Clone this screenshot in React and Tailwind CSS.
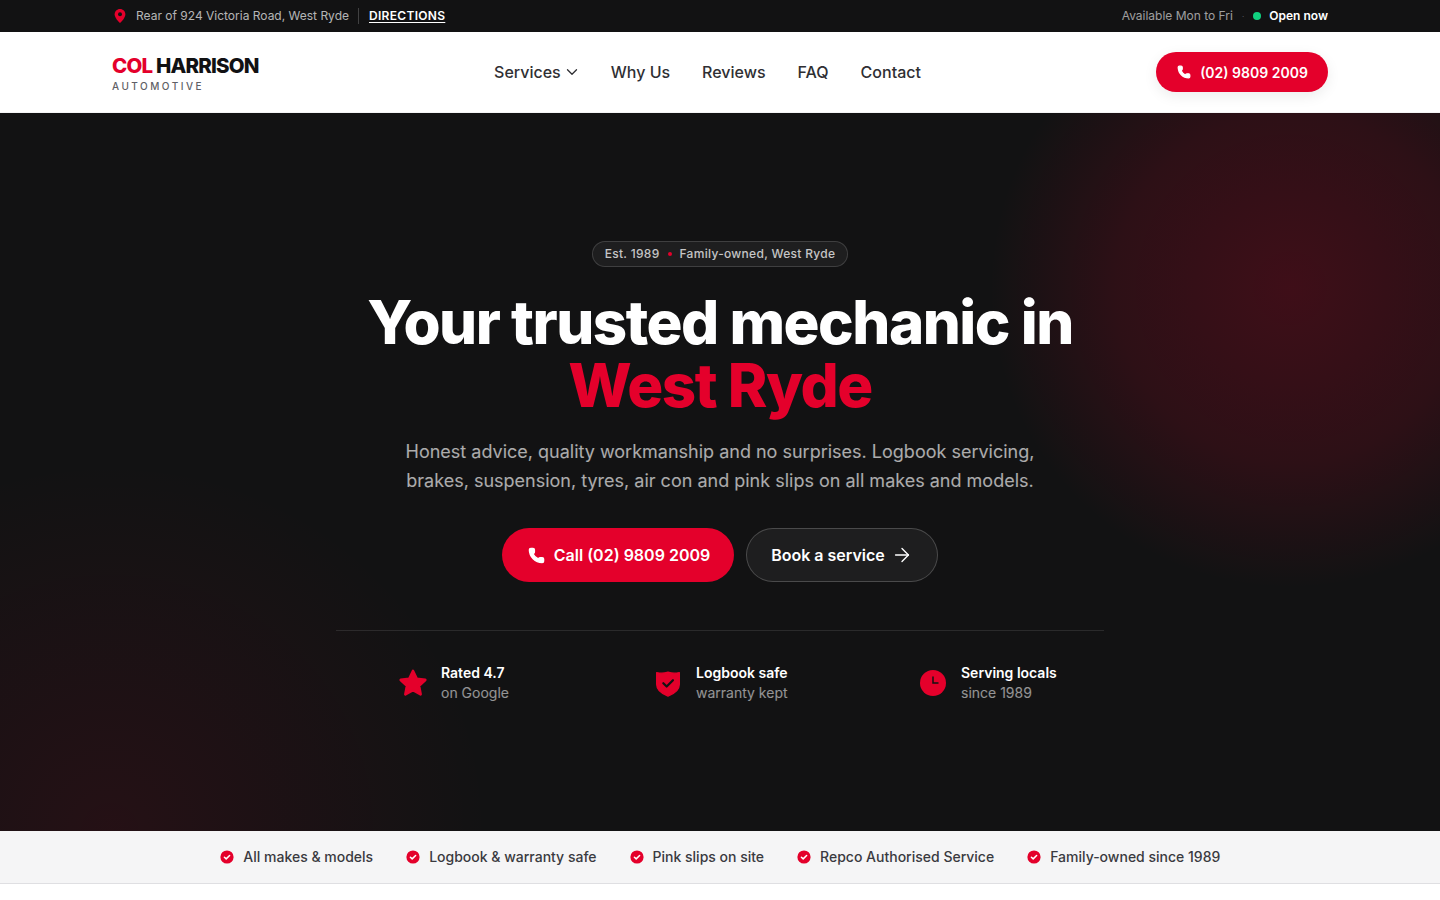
import React from "react";
import { ChevronDown, ArrowRight } from "lucide-react";

const RED = "#e4002b";

function PhoneIcon({ className }) {
  return (
    <svg viewBox="0 0 24 24" className={className} fill="currentColor" stroke="currentColor" strokeWidth="2" strokeLinecap="round" strokeLinejoin="round">
      <path d="M13.832 16.568a1 1 0 0 0 1.213-.303l.355-.465A2 2 0 0 1 17 15h3a2 2 0 0 1 2 2v3a2 2 0 0 1-2 2A18 18 0 0 1 2 4a2 2 0 0 1 2-2h3a2 2 0 0 1 2 2v3a2 2 0 0 1-.8 1.600l-.468.351a1 1 0 0 0-.292 1.233 14 14 0 0 0 6.392 6.384" />
    </svg>
  );
}

function CheckDot() {
  return (
    <svg viewBox="0 0 14 14" className="w-[14px] h-[14px] shrink-0">
      <circle cx="7" cy="7" r="6.600" fill={RED} />
      <path d="M4.400 7.200l1.800 1.700 3.400-3.400" fill="none" stroke="#fff" strokeWidth="1.500" strokeLinecap="round" strokeLinejoin="round" />
    </svg>
  );
}

function Stat({ icon, top, bottom }) {
  return (
    <div className="flex items-center gap-3">
      <div className="w-8 h-8 flex items-center justify-center shrink-0">{icon}</div>
      <div className="text-[14px] leading-5">
        <div className="font-semibold text-white whitespace-nowrap">{top}</div>
        <div className="text-white/55 whitespace-nowrap">{bottom}</div>
      </div>
    </div>
  );
}

export default function App() {
  return (
    <div className="min-h-[900px] bg-white font-['Inter',sans-serif]">
      <div className="bg-[#121213] h-8">
        <div className="max-w-[1280px] mx-auto px-8 h-full flex items-center justify-between text-[12px]">
          <div className="flex items-center">
            <svg viewBox="0 0 24 24" className="w-4 h-4 mr-2">
              <path d="M12 1.500c-4.600 0-8 3.500-8 8 0 5 5.200 10.600 7.400 12.600.4.3.8.3 1.200 0 2.200-2 7.400-7.600 7.400-12.600 0-4.500-3.400-8-8-8z" fill={RED} />
              <circle cx="12" cy="9.500" r="3" fill="#121213" />
            </svg>
            <span className="text-white/70">Rear of 924 Victoria Road, West Ryde</span>
            <span className="w-px h-4 bg-white/20 ml-[9px] mr-[10px]"></span>
            <a className="text-white font-semibold tracking-[0.025em] underline underline-offset-2">DIRECTIONS</a>
          </div>
          <div className="flex items-center">
            <span className="text-white/60">Available Mon to Fri</span>
            <span className="text-white/30 mx-[9px] text-[8px]">·</span>
            <span className="w-2 h-2 rounded-full bg-[#10d07f] mr-2"></span>
            <span className="text-white font-semibold">Open now</span>
          </div>
        </div>
      </div>

      <header className="bg-white h-[81px] border-b border-[#f4f4f5]">
        <div className="max-w-[1280px] mx-auto px-8 h-full flex items-center justify-between">
          <div className="w-[147px] pt-[2px]">
            <div className="text-[20.500px] leading-[26px] font-extrabold tracking-[-0.04em] whitespace-nowrap text-[#111113]">
              <span style={{ color: RED }}>COL</span> HARRISON
            </div>
            <div className="text-[10px] leading-[14px] tracking-[0.25em] text-[#5f5f66] font-medium">AUTOMOTIVE</div>
          </div>
          <nav className="flex items-center gap-8 text-[16px] font-medium text-[#2f2f33]">
            <a className="flex items-center gap-[2px]">Services <ChevronDown strokeWidth={1.75} style={{ width: 18, height: 18, marginRight: -2 }} /></a>
            <a>Why Us</a>
            <a>Reviews</a>
            <a>FAQ</a>
            <a>Contact</a>
          </nav>
          <a className="h-10 w-[172px] pl-[1px] rounded-full flex items-center justify-center gap-[9px] text-white text-[14px] font-semibold shadow-[0_4px_14px_rgba(0,0,0,0.08)]" style={{ backgroundColor: RED }}>
            <PhoneIcon className="w-[14px] h-[14px]" />
            (02) 9809 2009
          </a>
        </div>
      </header>

      <section className="relative overflow-hidden bg-[#121213] h-[718px] bg-[radial-gradient(circle_300px_at_1290px_175px,rgba(228,0,43,0.21),rgba(228,0,43,0.13)_58%,transparent_100%),radial-gradient(ellipse_380px_370px_at_110px_718px,rgba(228,0,43,0.09),transparent_100%)]">
        <div className="pt-32 flex flex-col items-center">
          <div className="h-[26px] px-3 rounded-full border border-white/15 bg-white/5 flex items-center text-[12px] font-medium text-white/75 tracking-[0.025em]">
            <span>Est. 1989</span>
            <span className="w-1 h-1 rounded-full mx-2" style={{ backgroundColor: RED }}></span>
            <span>Family-owned, West Ryde</span>
          </div>
          <h1 className="mt-[24px] text-center text-[60px] leading-[63px] font-extrabold tracking-[-0.025em] text-white">
            Your trusted mechanic in
            <br />
            <span style={{ color: RED }}>West Ryde</span>
          </h1>
          <p className="mt-[20px] text-center text-[18px] leading-[29px] text-white/65 max-w-[672px]">
            Honest advice, quality workmanship and no surprises. Logbook servicing,
            <br />
            brakes, suspension, tyres, air con and pink slips on all makes and models.
          </p>
          <div className="mt-[33px] flex items-center gap-3">
            <a className="h-[54px] w-[232px] pl-[2px] rounded-full flex items-center justify-center gap-[9px] text-white text-[16px] font-semibold" style={{ backgroundColor: RED }}>
              <PhoneIcon className="w-[17px] h-[17px]" />
              Call (02) 9809 2009
            </a>
            <a className="h-[54px] w-[192px] rounded-full flex items-center justify-center gap-[6px] text-white text-[16px] font-semibold border border-white/20 bg-white/5">
              Book a service
              <ArrowRight style={{ width: 22, height: 22 }} strokeWidth={1.5} />
            </a>
          </div>
          <div className="mt-[48px] w-[768px] border-t border-white/10 pt-[32px] pl-[61px] grid grid-cols-[255px_265px_auto]">
            <Stat
              top="Rated 4.7"
              bottom="on Google"
              icon={
                <svg viewBox="0 0 24 24" className="w-[32px] h-[32px]" fill={RED} stroke={RED} strokeWidth="2" strokeLinejoin="round">
                  <path d="M12 3l2.800 5.900 6.400.8-4.700 4.400 1.200 6.400L12 17.400l-5.700 3.100 1.200-6.400-4.700-4.400 6.400-.8z" />
                </svg>
              }
            />
            <Stat
              top="Logbook safe"
              bottom="warranty kept"
              icon={
                <svg viewBox="0 0 24 24" className="w-[32px] h-[32px]">
                  <path d="M3.500 4.200c3 .6 5.800.6 8.500-.4 2.700 1 5.500 1 8.500.4v8.800c0 3.800-3 6.800-8.500 8.800C6.500 19.800 3.500 16.800 3.500 13z" fill={RED} stroke={RED} strokeWidth="1" strokeLinejoin="round" />
                  <path d="M8.500 12.200l2.500 2.400 4.700-4.700" fill="none" stroke="#121213" strokeWidth="1.700" strokeLinecap="round" strokeLinejoin="round" />
                </svg>
              }
            />
            <Stat
              top="Serving locals"
              bottom="since 1989"
              icon={
                <svg viewBox="0 0 26 26" className="w-[26px] h-[26px]">
                  <circle cx="13" cy="13" r="13" fill={RED} />
                  <path d="M13 6.500V13h5.500" fill="none" stroke="#121213" strokeWidth="1.500" />
                </svg>
              }
            />
          </div>
        </div>
      </section>

      <div className="bg-[#f5f5f6] h-[53px] border-b border-[#dfdfe2] flex items-center justify-center gap-[33px] pb-[1px] pl-[0.6px] text-[14px] leading-5 font-medium text-[#3a3a40]">
        {["All makes & models", "Logbook & warranty safe", "Pink slips on site", "Repco Authorised Service", "Family-owned since 1989"].map((t) => (
          <div key={t} className="flex items-center gap-[9px] whitespace-nowrap">
            <CheckDot />
            <span>{t}</span>
          </div>
        ))}
      </div>
    </div>
  );
}
